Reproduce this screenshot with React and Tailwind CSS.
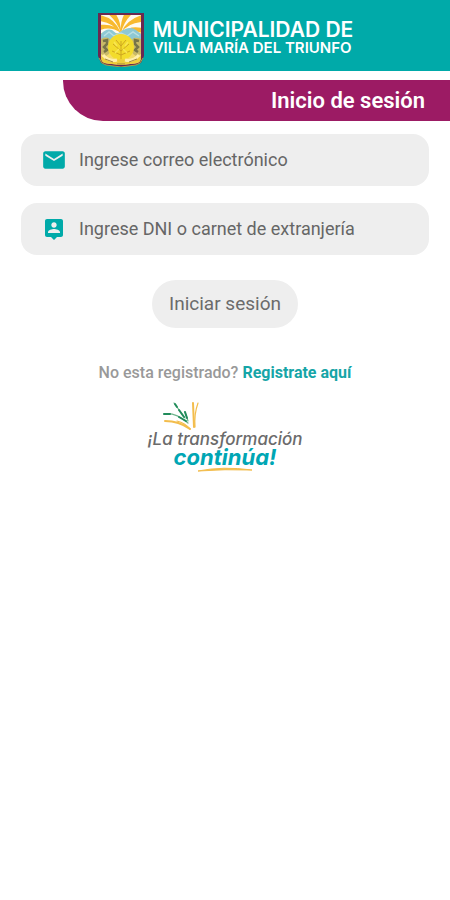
function Crest() {
  return (
    <svg viewBox="0 0 48 54" className="h-[54px] w-12 shrink-0" aria-hidden="true">
      <defs>
        <clipPath id="shield">
          <path d="M4 2H44V44Q44 50 38 50.5L24 52L10 50.5Q4 50 4 44Z" />
        </clipPath>
      </defs>
      <path d="M1 0H47V43L44 50L39 52L24 54L9 52L4 50L1 43Z" fill="#6b2850" />
      <path d="M2 45L5 50L9 52L24 54L39 52L43 50L46 45" fill="none" stroke="#a8a04a" strokeWidth="1" />
      <g clipPath="url(#shield)">
        <rect width="48" height="54" fill="#f4dc6a" />
        <rect width="48" height="20" fill="#fffaf0" />
        <path d="M24 20Q20 8 10 0H18Q24 8 24 20ZM24 20Q16 10 3 8V2Q18 5 24 20ZM24 20Q14 13 3 17V12Q17 10 24 20ZM24 20Q23 8 28 0H36Q27 8 24 20ZM24 20Q29 7 45 2V9Q31 10 24 20ZM24 20Q33 12 45 15V20Q32 15 24 20Z" fill="#f8b92e" />
        <path d="M4 21Q9 15 15 17L20 21L26 17Q34 13 39 17L44 21V27H4Z" fill="#8dc8d4" />
        <path d="M7 23L12 19L17 23L24 20L30 23L36 19L42 23" fill="none" stroke="#badfe3" strokeWidth="1.5" />
        <path d="M4 26Q12 22 14 29Q15 41 9 43L4 41ZM44 26Q35 22 34 30Q33 41 39 43L44 41Z" fill="#c9ba68" />
        <path d="M6 28L10 27L10 31L7 34L10 37L7 39M42 28L38 27L38 31L41 34L38 37L41 39" fill="none" stroke="#777448" strokeWidth="2.5" />
        <ellipse cx="24" cy="34" rx="13" ry="13" fill="#f3dc2c" />
        <path d="M24 46V28M24 38L16 31M24 38L32 31M24 33L19 27M24 33L29 27M24 42L15 38M24 42L33 38" stroke="#cda620" strokeWidth="1" />
        <path d="M17 29L20 33M31 29L28 33M18 40L22 36M30 40L26 36" stroke="#f8e653" strokeWidth="1.5" />
        <path d="M4 43Q12 48 24 46Q36 48 44 43V50L24 53L4 50Z" fill="#edcd3c" />
        <path d="M6 42Q12 49 20 47M42 42Q36 49 28 47" fill="none" stroke="#fff0ad" strokeWidth="3" />
        <path d="M8 46L16 49M40 46L32 49M20 51H28" stroke="#a18442" strokeWidth="1" />
      </g>
    </svg>
  );
}

function MailIcon() {
  return (
    <svg viewBox="0 0 24 24" className="size-[26px]" fill="#00aaa9" aria-hidden="true">
      <path d="M20 4H4c-1.100 0-1.990.9-1.990 2L2 18c0 1.100.9 2 2 2h16c1.100 0 2-.9 2-2V6c0-1.100-.9-2-2-2zm0 4l-8 5-8-5V6l8 5 8-5v2z" />
    </svg>
  );
}

function PersonPinIcon() {
  return (
    <svg viewBox="0 0 24 24" className="size-6" fill="#00aaa9" aria-hidden="true">
      <path d="M19 2H5c-1.110 0-2 .9-2 2v14c0 1.100.89 2 2 2h4l3 3 3-3h4c1.100 0 2-.9 2-2V4c0-1.100-.9-2-2-2zm-7 3.300c1.490 0 2.700 1.210 2.700 2.700s-1.210 2.700-2.700 2.700S9.300 9.490 9.300 8s1.210-2.700 2.700-2.700zM18 16H6v-.9c0-2 4-3.100 6-3.100s6 1.100 6 3.100v.9z" />
    </svg>
  );
}

function Field({ id, label, type, icon }) {
  return (
    <div className="flex h-13 items-center gap-3 rounded-2xl bg-[#eeeeee] pr-4 pl-5">
      <label htmlFor={id} aria-label={label} className="flex w-[26px] shrink-0 justify-center">
        {icon}
      </label>
      <input
        id={id}
        type={type}
        placeholder={label}
        className="h-full min-w-0 flex-1 bg-transparent pb-0.5 text-lg text-[#555] outline-none placeholder:text-[#666]"
      />
    </div>
  );
}

function Slogan() {
  return (
    <div className="flex flex-col items-center font-['Inter',sans-serif] italic">
      <svg viewBox="0 0 40 30" className="mr-[90px] h-[30px] w-10" fill="none" strokeLinecap="round" aria-hidden="true">
        <path d="M14 2L25 17M4 13Q15 11 28 22M25 11L28 20" stroke="#6db48b" strokeWidth="1.200" />
        <path d="M15 3L17 6M19 9L24 16M4 13L10 13M19 16L26 20M25 11L27 17" stroke="#218c5b" strokeWidth="2" />
        <path d="M5 20Q19 20 30 28M33 2L34 26" stroke="#f3bd4c" strokeWidth="2" />
        <path d="M17 20Q25 22 30 28M38 2Q34 13 35 26" stroke="#f3bd4c" strokeWidth="1.200" />
      </svg>
      <p className="text-[17px] leading-[17px] font-medium text-[#6b6b6b]">¡La transformación</p>
      <p className="text-[22px] leading-[19px] font-bold text-[#00a6b4]">continúa!</p>
      <svg viewBox="0 0 56 5" className="h-[5px] w-14" aria-hidden="true">
        <path d="M1 4Q26 -1 55 3Q28 2 1 4Z" fill="#f3bd4c" stroke="#f3bd4c" />
      </svg>
    </div>
  );
}

export default function App() {
  return (
    <div className="min-h-screen bg-white font-['Roboto',sans-serif]">
      <header className="flex h-[71px] items-center justify-center gap-2 bg-[#00aaa9] pt-2">
        <Crest />
        <h1 className="pb-1 font-['Inter',sans-serif] font-semibold whitespace-nowrap text-white">
          <span className="block text-[21px] leading-5">MUNICIPALIDAD DE</span>
          <span className="block text-[15px] leading-4">VILLA MARÍA DEL TRIUNFO</span>
        </h1>
      </header>
      <main>
        <h2 className="mt-[9px] ml-[63px] flex h-[41px] items-center justify-end rounded-bl-[40px] bg-[#9c1b64] pr-[25px] text-[22px] font-semibold text-white">
          Inicio de sesión
        </h2>
        <form className="mt-[13px] flex flex-col px-[21px]" onSubmit={(e) => e.preventDefault()}>
          <div className="flex flex-col gap-[17px]">
            <Field id="correo" type="email" label="Ingrese correo electrónico" icon={<MailIcon />} />
            <Field id="documento" type="text" label="Ingrese DNI o carnet de extranjería" icon={<PersonPinIcon />} />
          </div>
          <button type="submit" className="mt-[25px] h-12 self-center rounded-3xl bg-[#eeeeee] px-[17px] text-[19px] text-[#6b6b6b]">
            Iniciar sesión
          </button>
        </form>
        <p className="mt-[33px] mb-4 text-center text-base leading-6 font-medium text-[#999]">
          No esta registrado?{" "}
          <a href="#registro" className="font-bold text-[#16a5a7]">Registrate aquí</a>
        </p>
        <Slogan />
      </main>
    </div>
  );
}
